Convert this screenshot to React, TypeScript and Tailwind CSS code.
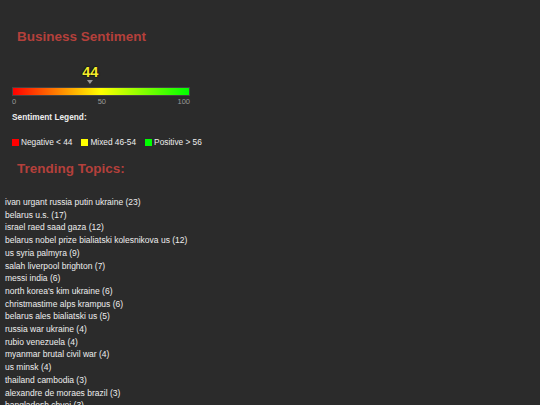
import React from 'react'

const score = 44

const topics: [string, number][] = [
  ['ivan urgant russia putin ukraine', 23],
  ['belarus u.s.', 17],
  ['israel raed saad gaza', 12],
  ['belarus nobel prize bialiatski kolesnikova us', 12],
  ['us syria palmyra', 9],
  ['salah liverpool brighton', 7],
  ['messi india', 6],
  ["north korea's kim ukraine", 6],
  ['christmastime alps krampus', 6],
  ['belarus ales bialiatski us', 5],
  ['russia war ukraine', 4],
  ['rubio venezuela', 4],
  ['myanmar brutal civil war', 4],
  ['us minsk', 4],
  ['thailand cambodia', 3],
  ['alexandre de moraes brazil', 3],
  ['bangladesh chvei', 3],
]

export default function App() {
  return (
    <div className="w-[540px] h-[405px] overflow-hidden bg-[#2b2b2b] text-[#eeeeee] font-['Liberation_Sans',Arial,sans-serif]">

      {/* Sentiment */}
      <h2 className="pl-[17px] pt-[29px] text-[13.5px] leading-[16px] font-bold text-[#b4403b]">Business Sentiment</h2>

      <div className="ml-[12px] mt-[20px] w-[178px]">
        <div className="relative h-[22px]">
          <div className="absolute top-0 -translate-x-1/2 flex flex-col items-center" style={{ left: `${score}%` }}>
            <span className="text-[14.5px] leading-[15px] font-bold text-[#f4ec2c] [text-shadow:0_0_2px_#000,0_0_1px_#000]">{score}</span>
            <span className="w-0 h-0 border-l-[3px] border-r-[3px] border-t-[4px] border-l-transparent border-r-transparent border-t-[#999999]"></span>
          </div>
        </div>
        <div className="h-[9px] border border-[#444] bg-[linear-gradient(to_right,#ff0000,#ffff00_50%,#00ff00)]"></div>
        <div className="flex justify-between text-[7.5px] leading-[10px] text-[#999999] mt-[1px]">
          <span>0</span>
          <span className="pl-[10px]">50</span>
          <span>100</span>
        </div>
      </div>

      <div className="ml-[12px] mt-[5px] text-[8.3px] leading-[11px] font-bold">Sentiment Legend:</div>

      <div className="ml-[12px] mt-[14px] flex items-center text-[8.3px] leading-[11px]">
        <span className="w-[7px] h-[7px] bg-[#ff0000] mr-[2px]"></span>
        <span>Negative &lt; 44</span>
        <span className="w-[7px] h-[7px] bg-[#ffff00] ml-[9px] mr-[2px]"></span>
        <span>Mixed 46-54</span>
        <span className="w-[7px] h-[7px] bg-[#00ff00] ml-[9px] mr-[2px]"></span>
        <span>Positive &gt; 56</span>
      </div>

      {/* Topics */}
      <h2 className="pl-[17px] mt-[13px] text-[13.5px] leading-[16px] font-bold text-[#b4403b]">Trending Topics:</h2>

      <ul className="pl-[5px] mt-[19px] text-[8.5px] leading-[12.7px]">
        {topics.map(([name, count]) => (
          <li key={name}>{name} ({count})</li>
        ))}
      </ul>
    </div>
  )
}
